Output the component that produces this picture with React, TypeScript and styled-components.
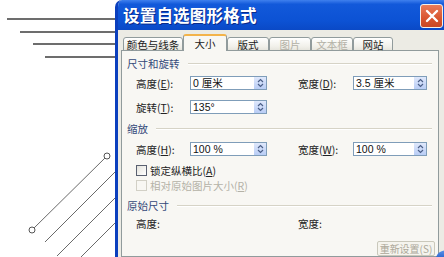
import React from "react";
import styled, { createGlobalStyle } from "styled-components";

const GlobalStyle = createGlobalStyle`
  html, body {
    margin: 0;
    padding: 0;
    background: #fff;
  }
  body {
    font-family: "Noto Sans CJK SC", "Liberation Sans", sans-serif;
  }
`;

//* drawing on the document behind the dialog
const hLines = [
  { x: 7, y: 19 },
  { x: 20, y: 32 },
  { x: 33, y: 44 },
  { x: 45, y: 57 },
];

const dLines = [
  { x1: 45, y1: 242, x2: 116, y2: 171 },
  { x1: 57, y1: 256, x2: 116, y2: 197 },
  { x1: 80, y1: 258, x2: 116, y2: 222 },
];

const tabs = [
  { label: "颜色与线条", width: 60 },
  { label: "大小", width: 44, active: true },
  { label: "版式", width: 42 },
  { label: "图片", width: 42, disabled: true },
  { label: "文本框", width: 42, disabled: true },
  { label: "网站", width: 40 },
];

const Spinner = () => (
  <SpinBox>
    <svg width="11" height="12" viewBox="0 0 11 12">
      <path d="M3 5 L5.5 2.6 L8 5" fill="none" stroke="#4b5f88" strokeWidth="1.2" />
      <path d="M3 7 L5.5 9.4 L8 7" fill="none" stroke="#4b5f88" strokeWidth="1.2" />
    </svg>
  </SpinBox>
);

const Field = ({
  label,
  hotkey,
  value,
  labelWidth,
  inputWidth,
}: {
  label: string;
  hotkey?: string;
  value?: string;
  labelWidth: number;
  inputWidth?: number;
}) => (
  <FieldWrap>
    <Label width={labelWidth}>
      {label}
      {hotkey ? (
        <>
          (<u>{hotkey}</u>):
        </>
      ) : (
        ":"
      )}
    </Label>
    {value !== undefined && (
      <Input width={inputWidth || 76}>
        <Value>{value}</Value>
        <Spinner />
      </Input>
    )}
  </FieldWrap>
);

const App = () => {
  return (
    <Page>
      <GlobalStyle />
      <Canvas width="115" height="257" viewBox="0 0 115 257">
        {hLines.map((l) => (
          <line key={l.y} x1={l.x} y1={l.y} x2="116" y2={l.y} stroke="#3c3c3c" strokeWidth="1.3" />
        ))}
        {dLines.map((l) => (
          <line key={l.x1} {...l} stroke="#6a6a6a" strokeWidth="1" />
        ))}
        <line x1="33" y1="229" x2="106" y2="157" stroke="#6a6a6a" strokeWidth="1" />
        <circle cx="32" cy="230" r="3" fill="#fff" stroke="#555" strokeWidth="1" />
        <circle cx="107" cy="156" r="3" fill="#fff" stroke="#555" strokeWidth="1" />
      </Canvas>

      <Window>
        <TitleBar>
          <Title>设置自选图形格式</Title>
          <CloseButton>
            <svg width="14" height="14" viewBox="0 0 14 14">
              <path d="M2 2 L12 12 M12 2 L2 12" stroke="#fff" strokeWidth="2.4" strokeLinecap="round" />
            </svg>
          </CloseButton>
        </TitleBar>

        <Body>
          <TabStrip>
            {tabs.map((t) => (
              <Tab key={t.label} width={t.width} active={!!t.active} disabled={!!t.disabled}>
                {t.label}
              </Tab>
            ))}
          </TabStrip>

          <Panel>
            <GroupTitle>
              <span>尺寸和旋转</span>
            </GroupTitle>
            <Row top={6}>
              <Field label="高度" hotkey="E" value="0 厘米" labelWidth={54} inputWidth={77} />
              <Field label="宽度" hotkey="D" value="3.5 厘米" labelWidth={55} inputWidth={74} />
            </Row>
            <Row top={10}>
              <Field label="旋转" hotkey="T" value="135°" labelWidth={54} inputWidth={77} />
            </Row>

            <GroupTitle top={7}>
              <span>缩放</span>
            </GroupTitle>
            <Row top={7}>
              <Field label="高度" hotkey="H" value="100 %" labelWidth={54} inputWidth={77} />
              <Field label="宽度" hotkey="W" value="100 %" labelWidth={55} inputWidth={74} />
            </Row>
            <CheckRow top={8}>
              <CheckBox />
              <span>
                锁定纵横比(<u>A</u>)
              </span>
            </CheckRow>
            <CheckRow top={2} disabled>
              <CheckBox disabled />
              <span>
                相对原始图片大小(<u>R</u>)
              </span>
            </CheckRow>

            <GroupTitle top={6}>
              <span>原始尺寸</span>
            </GroupTitle>
            <Row top={4}>
              <Field label="高度" labelWidth={131} />
              <Field label="宽度" labelWidth={55} />
            </Row>

            <ButtonRow>
              <ResetButton disabled>重新设置(S)</ResetButton>
            </ButtonRow>
          </Panel>
        </Body>
        <CornerGlint />
      </Window>
    </Page>
  );
};

const Page = styled.div`
  display: flex;
  width: 444px;
  height: 257px;
  overflow: hidden;
  background: #fff;
`;

const Canvas = styled.svg`
  flex: none;
  display: block;
`;

const Window = styled.div`
  flex: none;
  position: relative;
  width: 332px;
  height: 257px;
  display: flex;
  flex-direction: column;
  border-left: 3px solid #0b3fbd;
  border-top-left-radius: 7px;
  background: #ecebe4;
  overflow: hidden;
`;

const TitleBar = styled.div`
  height: 30px;
  flex: none;
  display: flex;
  align-items: center;
  justify-content: space-between;
  padding: 0 7px 0 5px;
  background: linear-gradient(#3f80ee 0%, #1259da 14%, #0c52d4 70%, #0a49c6 100%);
`;

const Title = styled.div`
  color: #fff;
  font-size: 16.5px;
  font-weight: 700;
  letter-spacing: 0.2px;
  text-shadow: 1px 1px 0 #0a2a8a;
  line-height: 20px;
`;

const CloseButton = styled.div`
  width: 21px;
  height: 22px;
  margin-top: 2px;
  display: flex;
  align-items: center;
  justify-content: center;
  border: 1px solid #f4f0ea;
  border-radius: 3px;
  background: linear-gradient(#ea7c5c, #d9552f 60%, #c94824);
`;

const Body = styled.div`
  flex: 1;
  display: flex;
  flex-direction: column;
  padding: 4px 11px 0 3px;
  background: #ecebe4;
`;

const TabStrip = styled.div`
  display: flex;
  align-items: flex-end;
  height: 17px;
  padding-left: 2px;
  margin-bottom: -1px;
  position: relative;
  z-index: 1;
`;

const Tab = styled.div<{ width: number; active: boolean; disabled: boolean }>`
  box-sizing: border-box;
  width: ${(p) => p.width}px;
  height: ${(p) => (p.active ? 17 : 14)}px;
  display: flex;
  align-items: center;
  justify-content: center;
  font-size: 10.5px;
  line-height: 12px;
  color: ${(p) => (p.disabled ? "#b2b0a5" : "#1a1a1a")};
  border: 1px solid #919b9c;
  border-top: ${(p) => (p.active ? "2px solid #f3b34a" : "1px solid #919b9c")};
  border-bottom: ${(p) => (p.active ? "none" : "1px solid #919b9c")};
  border-radius: 3px 3px 0 0;
  background: ${(p) =>
    p.active ? "#f8f7f3" : "linear-gradient(#ffffff, #f1f0ea 70%, #e6e5dd)"};
  padding-top: ${(p) => (p.active ? 0 : 1)}px;
`;

const Panel = styled.div`
  flex: 1;
  display: flex;
  flex-direction: column;
  padding-top: 5px;
  border: 1px solid #919b9c;
  background: #f8f7f3;
`;

const GroupTitle = styled.div<{ top?: number }>`
  display: flex;
  align-items: center;
  gap: 8px;
  height: 14px;
  margin: ${(p) => p.top || 0}px 6px 0 5px;
  font-size: 10.5px;
  color: #34497a;
  &::after {
    content: "";
    flex: 1;
    height: 1px;
    background: #d6d3c6;
    box-shadow: 0 1px 0 #fff;
  }
`;

const Row = styled.div<{ top: number }>`
  display: flex;
  align-items: center;
  gap: 31px;
  height: 14px;
  margin-top: ${(p) => p.top}px;
  padding-left: 14px;
`;

const FieldWrap = styled.div`
  display: flex;
  align-items: center;
`;

const Label = styled.div<{ width: number }>`
  width: ${(p) => p.width}px;
  font-size: 10.5px;
  color: #222;
  white-space: nowrap;
  u {
    text-underline-offset: 1px;
  }
`;

const Input = styled.div<{ width: number }>`
  box-sizing: border-box;
  width: ${(p) => p.width}px;
  height: 14px;
  display: flex;
  align-items: center;
  border: 1px solid #7f9db9;
  background: #fff;
`;

const Value = styled.div`
  flex: 1;
  padding-left: 2px;
  font-family: "Liberation Sans", "Noto Sans CJK SC", sans-serif;
  font-size: 10.5px;
  line-height: 12px;
  color: #111;
  white-space: nowrap;
`;

const SpinBox = styled.div`
  width: 12px;
  height: 12px;
  display: flex;
  align-items: center;
  justify-content: center;
  background: linear-gradient(#dfe8fb, #b9cdf5);
`;

const CheckRow = styled.div<{ top: number; disabled?: boolean }>`
  display: flex;
  align-items: center;
  gap: 3px;
  height: 13px;
  margin-top: ${(p) => p.top}px;
  padding-left: 14px;
  font-size: 10.5px;
  color: ${(p) => (p.disabled ? "#b4b2a7" : "#222")};
`;

const CheckBox = styled.div<{ disabled?: boolean }>`
  box-sizing: border-box;
  width: 11px;
  height: 11px;
  border: 1px solid ${(p) => (p.disabled ? "#d2d0c6" : "#5a6070")};
  background: ${(p) => (p.disabled ? "#f8f7f3" : "linear-gradient(135deg, #e4e3dc, #fff)")};
`;

const ButtonRow = styled.div`
  display: flex;
  justify-content: flex-end;
  margin-top: 11px;
  padding-right: 3px;
`;

const ResetButton = styled.button`
  box-sizing: border-box;
  width: 58px;
  height: 15px;
  padding: 0;
  font-family: "Noto Sans CJK SC", sans-serif;
  font-size: 10px;
  line-height: 12px;
  color: #aca899;
  border: 1px solid #cac8bb;
  border-radius: 2px;
  background: #f5f4ee;
`;

/* blue sliver of the frame corner showing at the bottom right */
const CornerGlint = styled.div`
  position: absolute;
  left: 318px;
  top: 250px;
  width: 16px;
  height: 10px;
  z-index: 2;
  background: linear-gradient(#5d95ea, #1d58c8);
  border-top-left-radius: 12px 8px;
`;

export default App;
